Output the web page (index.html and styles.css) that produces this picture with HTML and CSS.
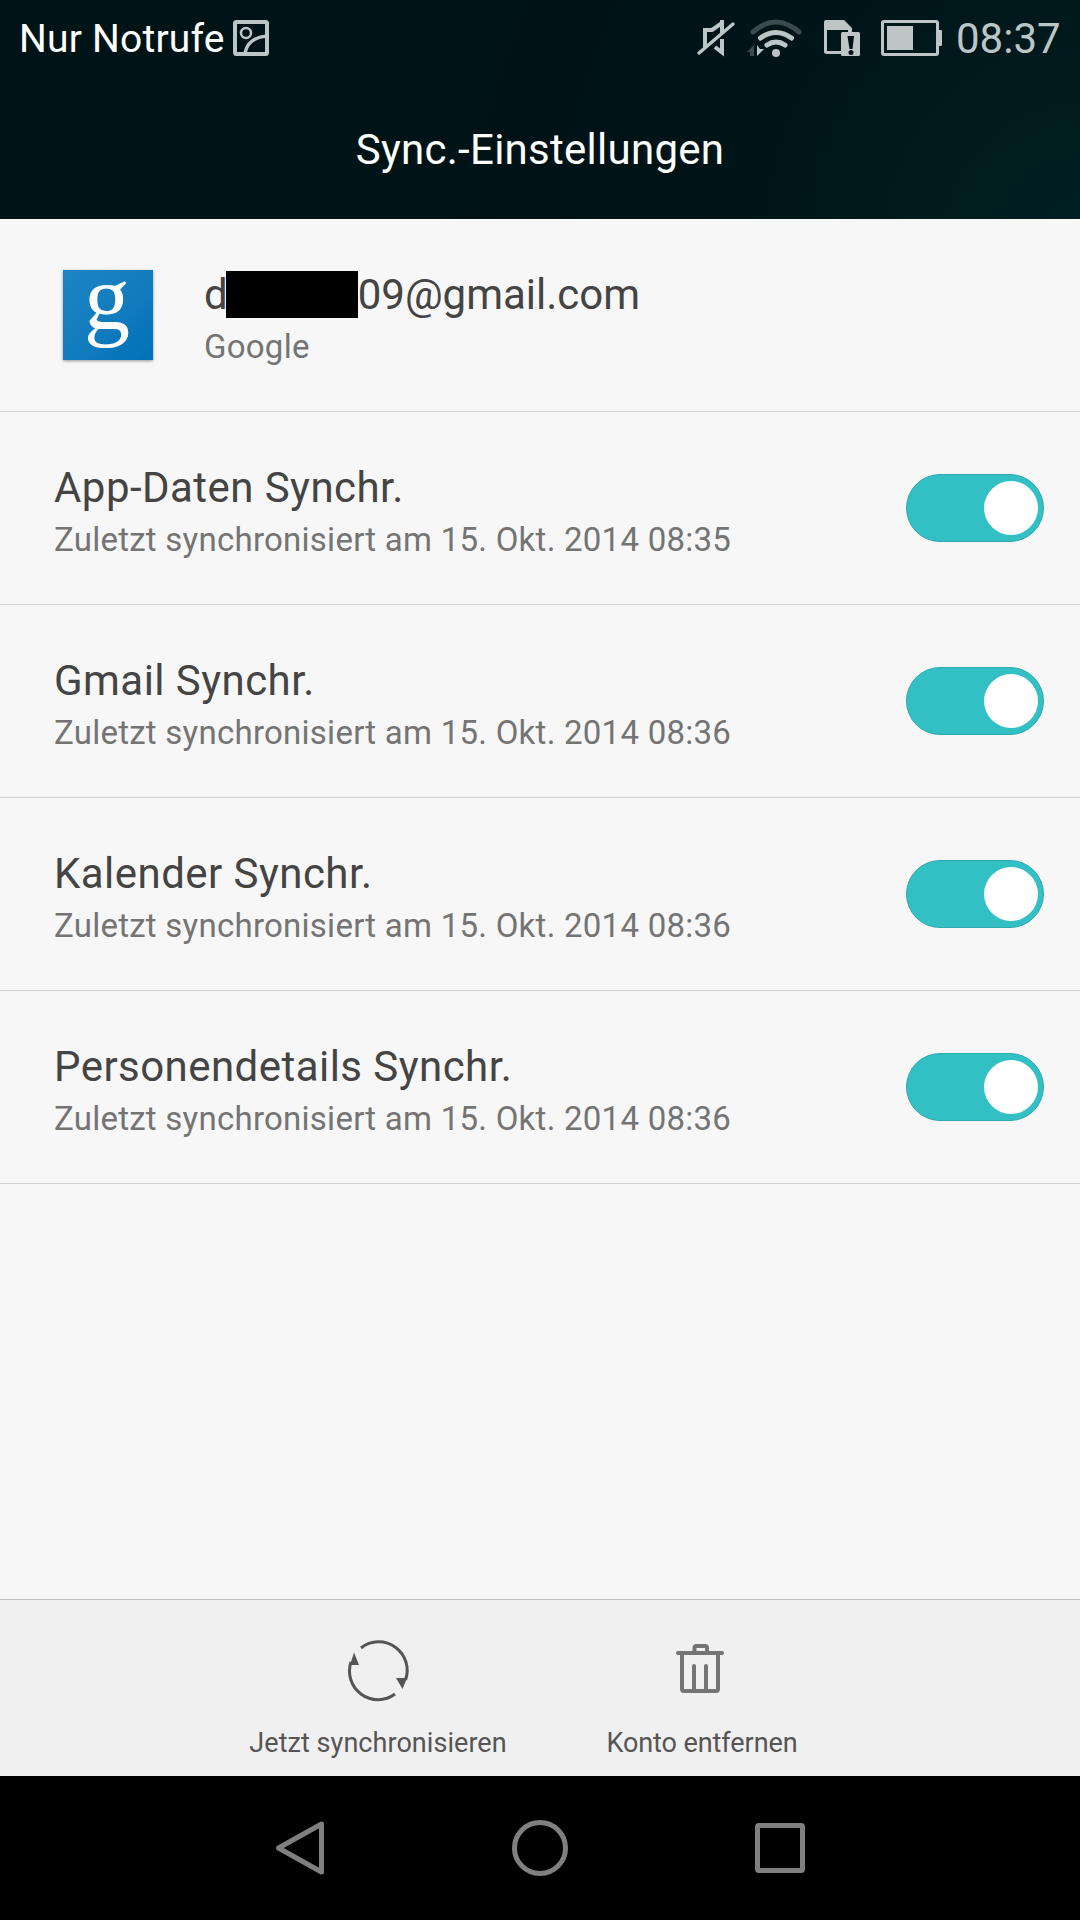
FILE: index.html
```html
<!DOCTYPE html>
<html lang="de">
<head>
    <meta charset="UTF-8">
    <title>Sync.-Einstellungen</title>
    <link rel="stylesheet" href="styles.css">
</head>
<body>

<div class="screen">
    <div class="header">
        <div class="status-bar">
            <span class="carrier">Nur Notrufe</span>
            <svg class="status-picture" width="36" height="36" viewBox="0 0 36 36" fill="none" stroke="#bdc5c6">
                <rect x="2" y="2" width="32" height="32" rx="1.5" stroke-width="4"/>
                <circle cx="13" cy="13" r="5" stroke-width="2.5"/>
                <path d="M12 33C14 23 22 17 34 16" stroke-width="3.4"/>
            </svg>
            <svg class="status-icons" width="246" height="42" viewBox="696 16 246 42" fill="none" stroke="#bdc5c6">
                <!-- mute -->
                <path d="M722 22L712 29H705V46" stroke-width="4"/>
                <path d="M722 19V32" stroke-width="4"/>
                <path d="M715 46L722 51.500V38" stroke-width="4"/>
                <path d="M699 52L733 23" stroke-width="3.400" stroke-linecap="round"/>
                <!-- wifi -->
                <path d="M753 31Q776 11 799 31" stroke="#3d4b4e" stroke-width="5" stroke-linecap="round"/>
                <path d="M760.500 37Q776 26 791.500 37" stroke-width="5" stroke-linecap="round"/>
                <path d="M767 44Q776 38 785 44" stroke-width="5" stroke-linecap="round"/>
                <circle cx="776" cy="52" r="4" fill="#bdc5c6" stroke="none"/>
                <path d="M754 44V55H750V51H747Z" fill="#3d4b4e" stroke="none"/>
                <path d="M757 44L760 48H764L757 55Z" fill="#bdc5c6" stroke="none"/>
                <!-- sim card -->
                <path d="M825.500 28V50.500Q825.500 51.500 827 51.500H842" stroke-width="3"/>
                <path d="M824 29V21Q824 19 826 19H844L852 27V32H848V29Z" fill="#bdc5c6" stroke="none"/>
                <rect x="841" y="31" width="19" height="24" rx="1.500" fill="#bdc5c6" stroke="none"/>
                <path d="M847.500 35H854L852.500 48H849.500Z" fill="#001416" stroke="none"/>
                <circle cx="851" cy="51.500" r="2.500" fill="#001416" stroke="none"/>
                <!-- battery -->
                <rect x="882.500" y="20.500" width="55" height="33" rx="1.500" stroke-width="3"/>
                <rect x="887" y="25" width="26" height="24" fill="#bdc5c6" stroke="none"/>
                <path d="M938 29H941Q942 29 942 30V44Q942 45 941 45H938Z" fill="#bdc5c6" stroke="none"/>
            </svg>
            <span class="clock">08:37</span>
        </div>
        <div class="header-title">Sync.-Einstellungen</div>
    </div>

    <div class="list">
        <div class="row account">
            <svg class="logo" width="90" height="90" viewBox="0 0 90 90">
                <defs>
                    <linearGradient id="blue" x1="0" y1="0" x2="1" y2="1">
                        <stop offset="0" stop-color="#1d85c4"/>
                        <stop offset="0.500" stop-color="#137cbd"/>
                        <stop offset="1" stop-color="#0071b8"/>
                    </linearGradient>
                </defs>
                <rect width="90" height="90" fill="url(#blue)"/>
                <text class="logo-letter" x="44" y="59" text-anchor="middle">g</text>
            </svg>
            <div class="row-text">
                <div class="row-title email">d<span class="redacted"></span>09@gmail.com</div>
                <div class="row-subtitle">Google</div>
            </div>
        </div>
        <div class="row">
            <div class="row-text">
                <div class="row-title">App-Daten Synchr.</div>
                <div class="row-subtitle">Zuletzt synchronisiert am 15. Okt. 2014 08:35</div>
            </div>
            <div class="switch"><div class="knob"></div></div>
        </div>
        <div class="row">
            <div class="row-text">
                <div class="row-title">Gmail Synchr.</div>
                <div class="row-subtitle">Zuletzt synchronisiert am 15. Okt. 2014 08:36</div>
            </div>
            <div class="switch"><div class="knob"></div></div>
        </div>
        <div class="row">
            <div class="row-text">
                <div class="row-title">Kalender Synchr.</div>
                <div class="row-subtitle">Zuletzt synchronisiert am 15. Okt. 2014 08:36</div>
            </div>
            <div class="switch"><div class="knob"></div></div>
        </div>
        <div class="row">
            <div class="row-text">
                <div class="row-title">Personendetails Synchr.</div>
                <div class="row-subtitle">Zuletzt synchronisiert am 15. Okt. 2014 08:36</div>
            </div>
            <div class="switch"><div class="knob"></div></div>
        </div>
    </div>

    <div class="actions">
        <div class="action sync">
            <svg width="72" height="72" viewBox="0 0 72 72" fill="none" stroke="#555" stroke-width="3">
                <path d="M19 14A28.500 28.500 0 0 1 63.500 46"/>
                <path d="M53 60A28.500 28.500 0 0 1 9 28"/>
                <path d="M12 18.500L17 31H8Z" fill="#555" stroke="none"/>
                <path d="M60.500 55L54 44H65Z" fill="#555" stroke="none"/>
            </svg>
            <span>Jetzt synchronisieren</span>
        </div>
        <div class="action remove">
            <svg width="72" height="72" viewBox="0 0 72 72" fill="none" stroke="#747474" stroke-width="4" stroke-linecap="round">
                <path d="M14 19H58"/>
                <path d="M30.500 19V14Q30.500 12 32.500 12H41Q43 12 43 14V19"/>
                <path d="M18 20V55Q18 57 20 57H52Q54 57 54 55V20"/>
                <path d="M30 32V56M42 32V56"/>
            </svg>
            <span>Konto entfernen</span>
        </div>
    </div>

    <div class="nav-bar">
        <svg width="60" height="60" viewBox="0 0 60 60">
            <path d="M51.500 6V54L8.500 30Z"/>
        </svg>
        <svg width="60" height="60" viewBox="0 0 60 60">
            <circle cx="30" cy="30" r="25.500"/>
        </svg>
        <svg width="60" height="60" viewBox="0 0 60 60">
            <rect x="7.500" y="7.500" width="45" height="45" rx="1.500"/>
        </svg>
    </div>
</div>

</body>
</html>
```

FILE: styles.css
```css
* {
    box-sizing: border-box;
    margin: 0;
    padding: 0;
}

body {
    background-color: #f7f7f7;
    font-family: Roboto, sans-serif;
    color: #444;
}

svg {
    display: block;
    flex-shrink: 0;
}

.screen {
    display: flex;
    flex-direction: column;
    width: 1080px;
    height: 1920px;
}

.header {
    height: 219px;
    background: radial-gradient(circle at 1080px 240px, #002023 0, #001518 330px, #001217 560px, #001417 720px);
    color: #fff;
}

.status-bar {
    display: flex;
    align-items: center;
    height: 75px;
    padding: 0 19px;
}

.carrier {
    width: 214px;
    padding-top: 2px;
    font-size: 39px;
    letter-spacing: 0.2px;
    white-space: nowrap;
}

.status-icons {
    margin-left: auto;
}

.clock {
    width: 105px;
    margin-left: 14px;
    padding-top: 2px;
    font-size: 42px;
    color: #bdc5c6;
    white-space: nowrap;
}

.header-title {
    height: 144px;
    line-height: 149px;
    font-size: 42px;
    letter-spacing: 0.27px;
    text-align: center;
}

.list {
    flex: 1;
}

.row {
    display: flex;
    align-items: center;
    justify-content: space-between;
    height: 193px;
    padding: 0 36px 0 54px;
    border-bottom: 1px solid #cfcfcf;
}

.account {
    justify-content: flex-start;
    padding-left: 63px;
    gap: 51px;
}

.logo {
    overflow: visible;
    box-shadow: 0 1px 3px rgba(0, 0, 0, 0.4);
}

.logo-letter {
    font-family: "Liberation Serif", serif;
    font-size: 92px;
    fill: #fff;
}

.row-text {
    padding-top: 12px;
}

.row-title {
    font-size: 42px;
    line-height: 52px;
    letter-spacing: 0.45px;
    white-space: nowrap;
}

.email {
    letter-spacing: 0;
}

.row-subtitle {
    font-size: 33px;
    line-height: 52px;
    letter-spacing: 0.25px;
    color: #747474;
    white-space: nowrap;
}

.redacted {
    display: inline-block;
    width: 132px;
    height: 47px;
    margin-left: -2px;
    background: #000;
    vertical-align: -9px;
}

.switch {
    display: flex;
    align-items: center;
    justify-content: flex-end;
    width: 138px;
    height: 68px;
    padding-right: 5px;
    background: #33c0c5;
    border: 1px solid #2fa9ad;
    border-radius: 34px;
}

.knob {
    width: 54px;
    height: 54px;
    background: #fff;
    border-radius: 50%;
}

.actions {
    display: flex;
    justify-content: center;
    height: 177px;
    padding: 34px 2px 0 0;
    background: #f0f0f0;
    border-top: 1px solid #bfbfbf;
}

.action {
    display: flex;
    flex-direction: column;
    align-items: center;
    width: 322px;
    font-size: 27px;
    color: #555;
    white-space: nowrap;
}

.action span {
    margin-top: 19px;
    line-height: 36px;
}

.sync span {
    letter-spacing: 0.05px;
}

.remove span {
    margin-left: 4px;
    letter-spacing: -0.08px;
}

.nav-bar {
    display: flex;
    align-items: center;
    justify-content: center;
    gap: 180px;
    height: 144px;
    background: #000;
}

.nav-bar svg {
    fill: none;
    stroke: #808080;
    stroke-width: 5;
    stroke-linejoin: round;
}
```
